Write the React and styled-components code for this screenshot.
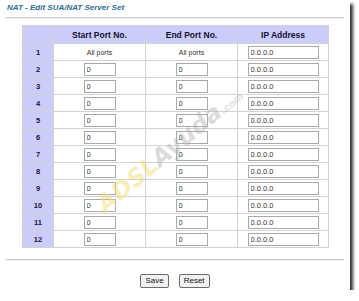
import React from 'react'
import styled, { createGlobalStyle } from 'styled-components'

const GlobalStyle = createGlobalStyle`
  html, body {
    margin: 0;
    padding: 0;
    background: #ffffff;
  }
  body {
    font-family: "Liberation Sans", Arial, sans-serif;
  }
`

const Page = styled.div`
  position: relative;
  width: 350px;
  height: 290px;
  background: #ffffff;
  box-shadow: 3px 4px 3px rgba(0, 0, 0, 0.8);
  overflow: hidden;
`

const Title = styled.h1`
  margin: 0;
  padding: 3px 0 0 7px;
  height: 11px;
  font-size: 8px;
  line-height: 10px;
  font-weight: bold;
  font-style: italic;
  color: #2a6d8f;
`

const Rule = styled.div`
  margin: ${({ $top }) => $top}px 6px 0 6px;
  height: 1px;
  background: #c9c9c9;
  border-bottom: 1px solid #efefef;
`

const Table = styled.table`
  margin: 6px 0 0 22px;
  width: 306px;
  border-collapse: collapse;
  table-layout: fixed;
  font-size: 7px;
  color: #222;
`

const HeadCell = styled.th`
  height: 17px;
  padding: 0;
  background: #ccccfb;
  border: 1px solid #d2d2d2;
  font-size: 8.5px;
  font-weight: bold;
  color: #111133;
  text-align: center;
`

const NumCell = styled.td`
  height: 16px;
  padding: 0;
  background: #ccccfb;
  border: 1px solid #d2d2d2;
  font-size: 7.5px;
  font-weight: bold;
  color: #14143a;
  text-align: center;
`

const Cell = styled.td`
  height: 16px;
  padding: 0;
  border: 1px solid #d2d2d2;
  text-align: center;
  font-size: 7px;
  color: #333;
`

const Field = styled.input`
  box-sizing: border-box;
  display: block;
  margin: 0 auto;
  width: ${({ $w }) => $w}px;
  height: 13px;
  padding: 0 2px;
  border: 1px solid #a9a9a9;
  font-family: "Liberation Sans", Arial, sans-serif;
  font-size: 7.5px;
  color: #333;
  background: #fff;
  outline: none;
`

const Buttons = styled.div`
  display: flex;
  justify-content: center;
  gap: 10px;
  margin-top: 13px;
`

const Button = styled.button`
  box-sizing: border-box;
  height: 14px;
  padding: 0 4px;
  border: 1px solid #6a6a6a;
  border-radius: 2px;
  background: #f1f1f1;
  font-family: "Liberation Sans", Arial, sans-serif;
  font-size: 8px;
  line-height: 12px;
  color: #111;
`

const Watermark = styled.div`
  position: absolute;
  left: 102px;
  top: 194px;
  transform: rotate(-40deg);
  transform-origin: left center;
  font-family: "DejaVu Sans", sans-serif;
  font-weight: bold;
  font-style: italic;
  font-size: 24px;
  line-height: 26px;
  white-space: nowrap;
  pointer-events: none;
  opacity: 0.5;
`

const Mark = styled.span`
  color: ${({ $c }) => $c};
  font-size: ${({ $s }) => $s}px;
`

const rows = Array.from({ length: 12 }, (_, i) => i + 1)

export default function App() {
  return (
    <>
      <GlobalStyle />
      <Page>
        <Title>NAT - Edit SUA/NAT Server Set</Title>
        <Rule $top={3} />
        <Table>
          <colgroup>
            <col style={{ width: 31 }} />
            <col style={{ width: 92 }} />
            <col style={{ width: 92 }} />
            <col style={{ width: 91 }} />
          </colgroup>
          <thead>
            <tr>
              <HeadCell />
              <HeadCell>Start Port No.</HeadCell>
              <HeadCell>End Port No.</HeadCell>
              <HeadCell>IP Address</HeadCell>
            </tr>
          </thead>
          <tbody>
            {rows.map(n => (
              <tr key={n}>
                <NumCell>{n}</NumCell>
                {n === 1 ? (
                  <>
                    <Cell>All ports</Cell>
                    <Cell>All ports</Cell>
                  </>
                ) : (
                  <>
                    <Cell>
                      <Field $w={32} defaultValue="0" />
                    </Cell>
                    <Cell>
                      <Field $w={32} defaultValue="0" />
                    </Cell>
                  </>
                )}
                <Cell>
                  <Field $w={71} defaultValue="0.0.0.0" />
                </Cell>
              </tr>
            ))}
          </tbody>
        </Table>
        <Rule $top={11} />
        <Buttons>
          <Button>Save</Button>
          <Button>Reset</Button>
        </Buttons>
        <Watermark>
          <Mark $c="#f3df7a">ADSL</Mark>
          <Mark $c="#b8b8b8">Ayuda</Mark>
          <Mark $c="#c4c4c4" $s={10}>.com</Mark>
        </Watermark>
      </Page>
    </>
  )
}
